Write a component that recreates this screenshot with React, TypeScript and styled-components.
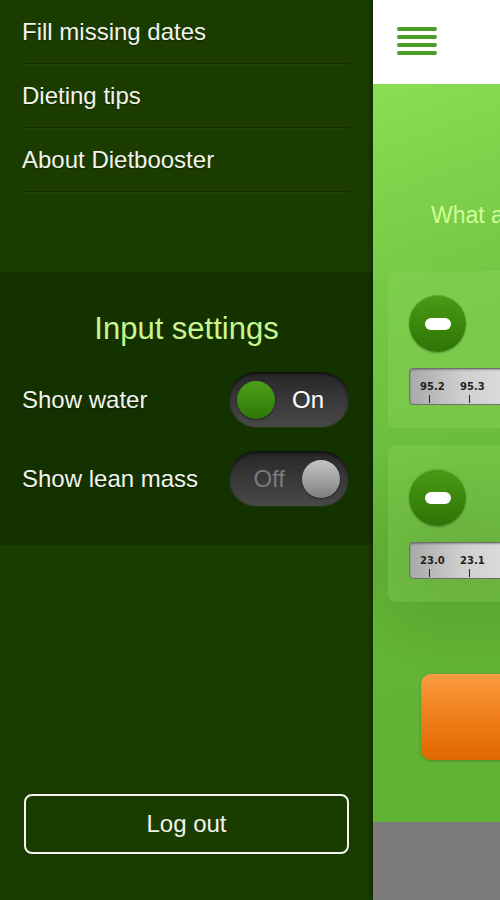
import React from 'react';
import styled, { createGlobalStyle } from 'styled-components';

const GlobalStyle = createGlobalStyle`
  html, body {
    margin: 0;
    padding: 0;
    width: 500px;
    height: 900px;
    overflow: hidden;
    font-family: "Liberation Sans", Arial, sans-serif;
  }
`;

const Screen = styled.div`
  display: flex;
  width: 500px;
  height: 900px;
  overflow: hidden;
`;

/* ---------- drawer ---------- */

const Drawer = styled.div`
  width: 373px;
  flex-shrink: 0;
  display: flex;
  flex-direction: column;
  background: #1a3c01;
`;

const MenuList = styled.div`
  display: flex;
  flex-direction: column;
  padding: 0 24px 0 22px;
`;

const MenuItem = styled.div`
  height: 63px;
  display: flex;
  align-items: center;
  font-size: 24px;
  color: #f2f4ec;
  border-bottom: 1px solid #102c00;
  box-shadow: 0 1px 0 rgba(255, 255, 255, 0.03);
  text-shadow: 0 1px 1px rgba(0, 0, 0, 0.4);
`;

const Settings = styled.div`
  margin-top: 80px;
  background: #143100;
  padding: 40px 24px 39px 22px;
  display: flex;
  flex-direction: column;
`;

const SettingsTitle = styled.div`
  font-size: 31px;
  color: #c8f590;
  text-align: center;
  margin-left: -22px;
  margin-right: -24px;
  line-height: 34px;
  margin-bottom: 26px;
`;

const SettingRow = styled.div`
  display: flex;
  align-items: center;
  justify-content: space-between;
  & + & {
    margin-top: 24px;
  }
`;

const SettingLabel = styled.div`
  font-size: 24px;
  color: #f2f4ec;
  text-shadow: 0 1px 1px rgba(0, 0, 0, 0.4);
`;

const Toggle = styled.div<{ on: boolean }>`
  width: 120px;
  height: 55px;
  border-radius: 28px;
  box-sizing: border-box;
  background: linear-gradient(180deg, #262626 0%, #3a3a3a 55%, #484848 100%);
  box-shadow: inset 0 2px 3px rgba(0, 0, 0, 0.6), 0 1px 0 rgba(255, 255, 255, 0.06);
  display: flex;
  align-items: center;
  flex-direction: ${p => (p.on ? 'row' : 'row-reverse')};
  padding: 0 9px 0 8px;
  gap: 17px;
`;

const Knob = styled.div<{ on: boolean }>`
  width: 38px;
  height: 38px;
  border-radius: 50%;
  flex-shrink: 0;
  background: ${p =>
    p.on
      ? 'linear-gradient(180deg, #4f9f1c 0%, #3a8a0e 60%, #2f7408 100%)'
      : 'linear-gradient(180deg, #c4c4c4 0%, #9c9c9c 60%, #7e7e7e 100%)'};
  box-shadow: 0 1px 2px rgba(0, 0, 0, 0.5);
`;

const ToggleText = styled.span<{ on: boolean }>`
  font-size: 24px;
  color: ${p => (p.on ? '#ffffff' : '#7a7a7a')};
`;

const DrawerFill = styled.div`
  flex: 1;
  display: flex;
  flex-direction: column;
  justify-content: flex-end;
  padding: 0 24px 46px 24px;
`;

const LogoutButton = styled.button`
  height: 60px;
  box-sizing: border-box;
  border: 2px solid #f4f4f0;
  border-radius: 8px;
  background: transparent;
  color: #f2f4ec;
  font-family: "Liberation Sans", Arial, sans-serif;
  font-size: 24px;
  padding: 0;
  cursor: pointer;
`;

/* ---------- main page (peeking) ---------- */

const Main = styled.div`
  flex: 1;
  display: flex;
  flex-direction: column;
  overflow: hidden;
  box-shadow: -2px 0 4px rgba(0, 0, 0, 0.3);
`;

const Header = styled.div`
  height: 84px;
  flex-shrink: 0;
  background: #ffffff;
  display: flex;
  align-items: center;
  padding-left: 24px;
`;

const Hamburger = styled.div`
  display: flex;
  flex-direction: column;
  gap: 4px;
  margin-top: -2px;
  span {
    display: block;
    width: 40px;
    height: 4px;
    border-radius: 2px;
    background: #4a9e28;
  }
`;

const GreenArea = styled.div`
  flex: 1;
  min-width: 500px;
  background:
    radial-gradient(ellipse 160px 120px at 90px 470px, rgba(40, 90, 10, 0.25), transparent),
    linear-gradient(160deg, #8ade52 0%, #73c744 25%, #63b536 60%, #5eaf32 100%);
  display: flex;
  flex-direction: column;
  padding: 118px 0 0 15px;
`;

const Question = styled.div`
  font-size: 23px;
  color: #d2fc98;
  padding-left: 43px;
  white-space: nowrap;
  line-height: 26px;
  margin-bottom: 43px;
`;

const Card = styled.div`
  width: 460px;
  height: 157px;
  box-sizing: border-box;
  border-radius: 8px;
  background: rgba(150, 220, 100, 0.28);
  padding: 24px 0 0 21px;
  display: flex;
  flex-direction: column;
  & + & {
    margin-top: 17px;
  }
`;

const MinusButton = styled.div`
  width: 57px;
  height: 57px;
  border-radius: 50%;
  background: linear-gradient(180deg, #4a9a16 0%, #3a860c 55%, #2f7407 100%);
  box-shadow: 0 1px 2px rgba(0, 0, 0, 0.3), inset 0 1px 0 rgba(255, 255, 255, 0.15);
  display: flex;
  align-items: center;
  justify-content: center;
  span {
    width: 26px;
    height: 12px;
    border-radius: 6px;
    background: #ffffff;
  }
`;

const Ruler = styled.div`
  margin-top: 16px;
  height: 37px;
  width: 440px;
  box-sizing: border-box;
  border-radius: 4px;
  border: 1px solid #6f6f6f;
  background: linear-gradient(90deg, #a9a9a9 0%, #cfcfcf 12%, #e6e6e6 30%, #f0f0f0 50%);
  box-shadow: inset 0 1px 2px rgba(0, 0, 0, 0.3);
  display: flex;
  padding-left: 10px;
`;

const Tick = styled.div`
  width: 40px;
  display: flex;
  flex-direction: column;
  align-items: flex-start;
  b {
    font-family: "DejaVu Sans", Verdana, sans-serif;
    font-size: 10px;
    font-weight: bold;
    color: #222;
    margin-top: 12px;
    width: 20px;
    text-align: center;
  }
  i {
    display: block;
    width: 1px;
    height: 8px;
    background: #222;
    margin-top: 3px;
    margin-left: 9px;
  }
`;

const OrangeButton = styled.div`
  margin-top: 72px;
  margin-left: 33px;
  width: 400px;
  height: 86px;
  border-radius: 10px;
  background: linear-gradient(180deg, #fb9c42 0%, #f0801c 45%, #e06800 100%);
  box-shadow: 0 1px 3px rgba(0, 0, 0, 0.25);
`;

const Footer = styled.div`
  height: 78px;
  flex-shrink: 0;
  background: #7b7b7b;
`;

const menu = ['Fill missing dates', 'Dieting tips', 'About Dietbooster'];

const rulers = [
  ['95.2', '95.3', '95.4', '95.5', '95.6'],
  ['23.0', '23.1', '23.2', '23.3', '23.4'],
];

export default function App() {
  return (
    <>
      <GlobalStyle />
      <Screen>
        <Drawer>
          <MenuList>
            {menu.map(m => (
              <MenuItem key={m}>{m}</MenuItem>
            ))}
          </MenuList>
          <Settings>
            <SettingsTitle>Input settings</SettingsTitle>
            <SettingRow>
              <SettingLabel>Show water</SettingLabel>
              <Toggle on>
                <Knob on />
                <ToggleText on>On</ToggleText>
              </Toggle>
            </SettingRow>
            <SettingRow>
              <SettingLabel>Show lean mass</SettingLabel>
              <Toggle on={false}>
                <Knob on={false} />
                <ToggleText on={false}>Off</ToggleText>
              </Toggle>
            </SettingRow>
          </Settings>
          <DrawerFill>
            <LogoutButton>Log out</LogoutButton>
          </DrawerFill>
        </Drawer>

        <Main>
          <Header>
            <Hamburger>
              <span />
              <span />
              <span />
              <span />
            </Hamburger>
          </Header>
          <GreenArea>
            <Question>What are your measurements today?</Question>
            {rulers.map((r, i) => (
              <Card key={i}>
                <MinusButton>
                  <span />
                </MinusButton>
                <Ruler>
                  {r.map(v => (
                    <Tick key={v}>
                      <b>{v}</b>
                      <i />
                    </Tick>
                  ))}
                </Ruler>
              </Card>
            ))}
            <OrangeButton />
          </GreenArea>
          <Footer />
        </Main>
      </Screen>
    </>
  );
}
